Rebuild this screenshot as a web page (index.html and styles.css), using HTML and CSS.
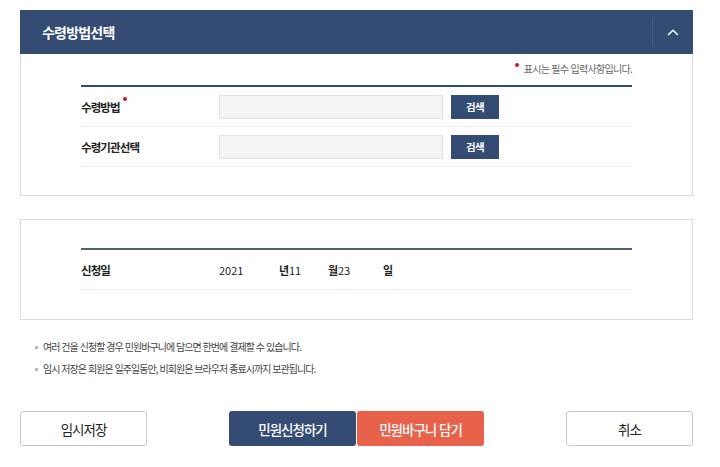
FILE: index.html
```html
<!DOCTYPE html>
<html lang="ko">
<head>
<meta charset="utf-8">
<title>수령방법선택</title>
<link rel="stylesheet" href="styles.css">
</head>
<body>
<div class="page">
  <section class="panel">
    <div class="panel-head">
      <h2 class="panel-title">수령방법선택</h2>
      <button class="toggle" type="button" aria-label="접기">
        <svg width="12" height="7" viewBox="0 0 12 7"><path d="M1 6 L6 1.2 L11 6" fill="none" stroke="#fff" stroke-width="1.4"/></svg>
      </button>
    </div>
    <div class="panel-body">
      <p class="req-note"><span class="dot"></span>표시는 필수 입력사항입니다.</p>
      <div class="form-table">
        <div class="row">
          <div class="label">수령방법<span class="req"></span></div>
          <div class="field">
            <input class="text-input" type="text">
            <button class="search-btn" type="button">검색</button>
          </div>
        </div>
        <div class="row">
          <div class="label">수령기관선택</div>
          <div class="field">
            <input class="text-input" type="text">
            <button class="search-btn" type="button">검색</button>
          </div>
        </div>
      </div>
    </div>
  </section>

  <section class="panel panel-plain">
    <div class="form-table">
      <div class="row">
        <div class="label">신청일</div>
        <div class="field date">
          <span class="val v-year">2021</span><span class="unit">년</span>
          <span class="val v-month">11</span><span class="unit">월</span>
          <span class="val v-day">23</span><span class="unit">일</span>
        </div>
      </div>
    </div>
  </section>

  <ul class="notes">
    <li>여러 건을 신청할 경우 민원바구니에 담으면 한번에 결제할 수 있습니다.</li>
    <li>임시 저장은 회원은 일주일동안, 비회원은 브라우저 종료시까지 보관됩니다.</li>
  </ul>

  <div class="actions">
    <button class="btn btn-line" type="button">임시저장</button>
    <div class="btn-group">
      <button class="btn btn-navy" type="button">민원신청하기</button>
      <button class="btn btn-orange" type="button">민원바구니 담기</button>
    </div>
    <button class="btn btn-line" type="button">취소</button>
  </div>
</div>
</body>
</html>
```

FILE: styles.css
```css
* { box-sizing: border-box; }
html, body { margin: 0; padding: 0; background: #fff; }
body {
  font-family: "Noto Sans CJK KR", "Noto Sans", sans-serif;
  color: #222;
  width: 720px;
}
.page {
  padding: 10px 27px 0 20px;
}
.panel-head {
  height: 44px;
  background: #344b73;
  display: flex;
  align-items: center;
  justify-content: space-between;
  padding-left: 22px;
}
.panel-title {
  margin: 0;
  color: #fff;
  font-size: 14px;
  font-weight: 700;
  letter-spacing: -0.8px;
  line-height: 20px;
}
.toggle {
  width: 41px;
  height: 30px;
  border: 0;
  border-left: 1px solid #45608c;
  background: transparent;
  padding: 0;
  display: flex;
  align-items: center;
  justify-content: center;
}
.panel-body {
  border: 1px solid #dcdcdc;
  border-top: 0;
  padding: 0 60px 30px 60px;
  height: 142px;
}
.req-note {
  margin: 0;
  height: 31px;
  padding-top: 8px;
  text-align: right;
  font-size: 10px;
  line-height: 14px;
  letter-spacing: -0.7px;
  color: #666;
}
.dot, .req {
  display: inline-block;
  width: 4px;
  height: 4px;
  border-radius: 50%;
  background: #d8141c;
  vertical-align: top;
}
.dot { margin: 1px 5px 0 0; }
.req { margin: -2px 0 0 3px; }
.form-table {
  border-top: 2px solid #344b73;
}
.row {
  display: flex;
  align-items: center;
  height: 40px;
  border-bottom: 1px solid #ececec;
}
.label {
  width: 138px;
  font-size: 11.5px;
  font-weight: 700;
  letter-spacing: -0.9px;
  color: #222;
  line-height: 16px;
}
.field {
  display: flex;
  align-items: center;
}
.text-input {
  width: 224px;
  height: 24px;
  background: #f4f4f4;
  border: 1px solid #e2e2e2;
  margin: 0;
  padding: 0;
}
.search-btn {
  margin-left: 8px;
  width: 48px;
  height: 24px;
  background: #344b73;
  color: #fff;
  border: 0;
  font-family: inherit;
  font-size: 10.5px;
  font-weight: 700;
  letter-spacing: -0.6px;
  padding: 0;
}
.panel-plain {
  margin-top: 23px;
  border: 1px solid #dcdcdc;
  padding: 28px 60px 29px 60px;
}
.panel-plain .form-table { border-top-color: #506079; }
.date {
  font-size: 11px;
  color: #222;
  line-height: 16px;
}
.val { display: inline-block; }
.v-year { width: 60px; }
.v-month { width: 39px; }
.v-day { width: 45px; }
.unit { display: inline-block; width: 10px; font-weight: 700; letter-spacing: -0.5px; }
.notes {
  list-style: none;
  margin: 16px 0 0 0;
  padding: 0 0 0 23px;
}
.notes li {
  position: relative;
  font-size: 10px;
  line-height: 22px;
  letter-spacing: -0.95px;
  color: #444;
}
.notes li::before {
  content: "";
  position: absolute;
  left: -8px;
  top: 10px;
  width: 3px;
  height: 3px;
  background: #bbb;
}
.actions {
  margin-top: 31px;
  display: flex;
  justify-content: space-between;
}
.btn-group { display: flex; gap: 1px; }
.btn {
  width: 127px;
  height: 35px;
  border-radius: 3px;
  font-family: inherit;
  font-size: 13.5px;
  letter-spacing: -1px;
  padding: 0;
}
.btn-line {
  background: #fff;
  border: 1px solid #c8c8c8;
  color: #222;
}
.btn-navy {
  background: #344b73;
  border: 0;
  color: #fff;
  font-weight: 500;
}
.btn-orange {
  background: #e8614a;
  border: 0;
  color: #fff;
  font-weight: 500;
}
```
